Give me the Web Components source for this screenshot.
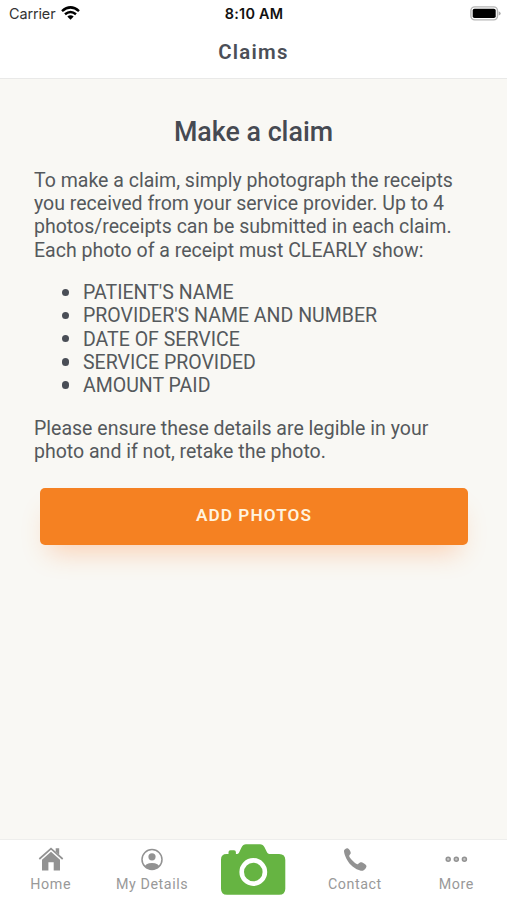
<!DOCTYPE html>
<html lang="en">
<head>
<meta charset="utf-8">
<title>Claims</title>
<style>
html,body{margin:0;height:100%;background:#fff}
body{font-family:Roboto,"Liberation Sans",sans-serif;color:#55595c}
</style>
</head>
<body>
<claims-app></claims-app>
<script>
function define(name, markup) {
  customElements.define(name, class extends HTMLElement {
    constructor() {
      super();
      const t = document.createElement('template');
      t.innerHTML = markup;
      this.attachShadow({mode: 'open'}).append(t.content.cloneNode(true));
    }
  });
}

define('status-bar', `
<style>
:host{display:grid;grid-template-columns:1fr auto 1fr;align-items:center;height:28px;padding:0 6px 0 9px;box-sizing:border-box;color:#111;font:14.4px/28px Inter,sans-serif}
.left{display:flex;align-items:center;gap:6px}
.carrier{color:#333;letter-spacing:-.1px}
.time{font-weight:600;font-size:14.4px;letter-spacing:.25px;color:#111;margin-right:2px}
.right{display:flex;justify-content:flex-end}
svg{display:block}
.wifi{margin-top:-2px}
.battery{margin-top:-2px}
</style>
<div class="left"><span class="carrier">Carrier</span>
<svg class="wifi" width="19" height="14" viewBox="0 0 19 14"><g fill="none" stroke="#000" stroke-width="2.5"><path d="M1 5.1Q9.500-2.300 18 5.100"/><path d="M4 8.300Q9.500 3.800 15 8.300"/></g><path d="M6.300 10.500Q9.500 8 12.700 10.500L9.500 13.800Z"/></svg></div>
<span class="time">8:10 AM</span>
<div class="right"><svg class="battery" width="31" height="15" viewBox="0 0 31 15"><rect x=".9" y=".9" width="26.600" height="13" rx="3.800" fill="#fff" stroke="#b5b5b5" stroke-width="1.400"/><rect x="2.700" y="2.700" width="23" height="9.400" rx="1.800"/><path d="M28.700 5.200Q30.700 6 30.700 7.400T28.700 9.600Z" fill="#aaa"/></svg></div>`);

define('title-bar', `
<style>
:host{display:flex;justify-content:center;height:51px;box-sizing:border-box;border-bottom:1px solid #e9e9e8;color:#4b4f57}
h1{margin:0;font-size:20.400px;font-weight:600;line-height:48px;letter-spacing:1.250px}
</style><h1><slot></slot></h1>`);

define('claim-guide', `
<style>
:host{display:block;padding:0 34px;font-size:19.530px;line-height:23.200px}
h2{margin:37px 0 20px;text-align:center;font-size:26.800px;line-height:33px;font-weight:500;color:#464a52}
p{margin:0 0 19.400px;white-space:nowrap}
ul{margin:0 0 19.400px;padding-left:49px;list-style:none}
li{display:flex;align-items:center;white-space:nowrap}
li::before{content:"";flex:none;width:7.500px;height:7.500px;border-radius:50%;background:#4a4e56;margin:-1px 14px 0 -21.500px}
</style>
<h2>Make a claim</h2>
<p>To make a claim, simply photograph the receipts<br>you received from your service provider. Up to 4<br>photos/receipts can be submitted in each claim.<br>Each photo of a receipt must CLEARLY show:</p>
<ul><li>PATIENT'S NAME</li><li>PROVIDER'S NAME AND NUMBER</li><li>DATE OF SERVICE</li><li>SERVICE PROVIDED</li><li>AMOUNT PAID</li></ul>
<p>Please ensure these details are legible in your<br>photo and if not, retake the photo.</p>`);

define('action-button', `
<style>
:host{display:block;margin:25px 39px 0 40px}
button{display:block;width:100%;height:57px;border:0;border-radius:5px;background:#f58122;color:#fff3df;font:600 17.200px/54px Roboto,sans-serif;padding:0 0 3px;letter-spacing:1.080px;box-shadow:0 16px 27px -9px rgba(255,125,45,.32)}
</style><button><slot></slot></button>`);

define('tab-item', `
<style>
:host{display:flex;flex-direction:column;align-items:center;flex:1 1 0;min-width:0;color:#999;font-size:14.300px;line-height:17px;letter-spacing:.560px;white-space:nowrap}
.icon{height:36px;display:flex;align-items:flex-start}
</style><div class="icon"><slot name="icon"></slot></div><span><slot></slot></span>`);

define('tab-bar', `
<style>
:host{display:flex;height:61px;box-sizing:border-box;border-top:1px solid #eeeeec;background:#fff}
svg{display:block}
.i{margin-top:7px}
.cam{margin:4px 1px 0 0}
</style>
<tab-item><svg slot="icon" class="i" width="26" height="24" viewBox="0 0 26 24" fill="#929292"><path d="M4 12.700 13 4.700 22 12.700V23.500H15.700V15.200H10.400V23.500H4Z"/><path d="M1.300 12 13 1.700 24.700 12" fill="none" stroke="#929292" stroke-width="1.700"/><path d="M17.700 1.300H21.200V7.700L17.700 4.700Z"/></svg>Home</tab-item>
<tab-item><svg slot="icon" class="i" width="24" height="24" viewBox="0 0 24 24"><defs><clipPath id="c"><circle cx="12" cy="12.500" r="10"/></clipPath></defs><circle cx="12" cy="12.500" r="10" fill="none" stroke="#929292" stroke-width="1.500"/><circle cx="12" cy="9.800" r="3.600" fill="#929292"/><ellipse cx="12" cy="20.700" rx="7.600" ry="4.800" fill="#929292" clip-path="url(#c)"/></svg>My Details</tab-item>
<tab-item><svg slot="icon" class="cam" width="66" height="52" viewBox="0 0 66 52"><path d="M6.500 10H8.500V8.200Q8.500 6.300 10.400 6.300H14Q15.900 6.300 15.900 8.200V10H17.300Q18.500 10 19.100 8.600L21.600 3.300Q23 .3 26 .3H40Q43 .3 44.500 3.300L47.100 8.600Q47.800 10 49.300 10H59.200Q65.300 10 65.300 16V44.800Q65.300 50.800 59.200 50.800H7Q1 50.800 1 44.800V15.500Q1 10 6.500 10Z" fill="#66b442"/><circle cx="33.300" cy="28" r="11.600" fill="none" stroke="#fff" stroke-width="4.600"/></svg></tab-item>
<tab-item><svg slot="icon" class="i" width="24" height="24" viewBox="0 0 24 24"><path d="M1 4.200C.8 2.700 3 .9 4.600 1.200 6.200 1.500 7.700 4.400 7.800 6 7.900 7.200 6.100 8.200 6.200 9.100 6.400 11.100 11.900 16.700 14.300 17.200 15.300 17.400 16.200 15.600 17.500 15.300 19.200 15 22.700 17.200 23.400 18.700 24 20.100 21.400 23.200 19.900 23.700 17.400 24.400 11.600 21.700 8 18 4.500 14.500 1.400 8.400 1 4.200Z" fill="#929292"/></svg>Contact</tab-item>
<tab-item><svg slot="icon" class="i" width="24" height="24" viewBox="0 0 24 24"><g fill="#c5c5c5" stroke="#929292" stroke-width="1.500"><circle cx="4.200" cy="12.300" r="2"/><circle cx="12.300" cy="12.300" r="2"/><circle cx="20.400" cy="12.300" r="2"/></g></svg>More</tab-item>`);

define('claims-app', `
<style>
:host{display:flex;flex-direction:column;height:900px;overflow:hidden;background:#fff}
main{flex:1;display:flow-root;background:#f9f8f4}
</style>
<status-bar></status-bar>
<title-bar>Claims</title-bar>
<main><claim-guide></claim-guide><action-button>ADD PHOTOS</action-button></main>
<tab-bar></tab-bar>`);
</script>
</body>
</html>
